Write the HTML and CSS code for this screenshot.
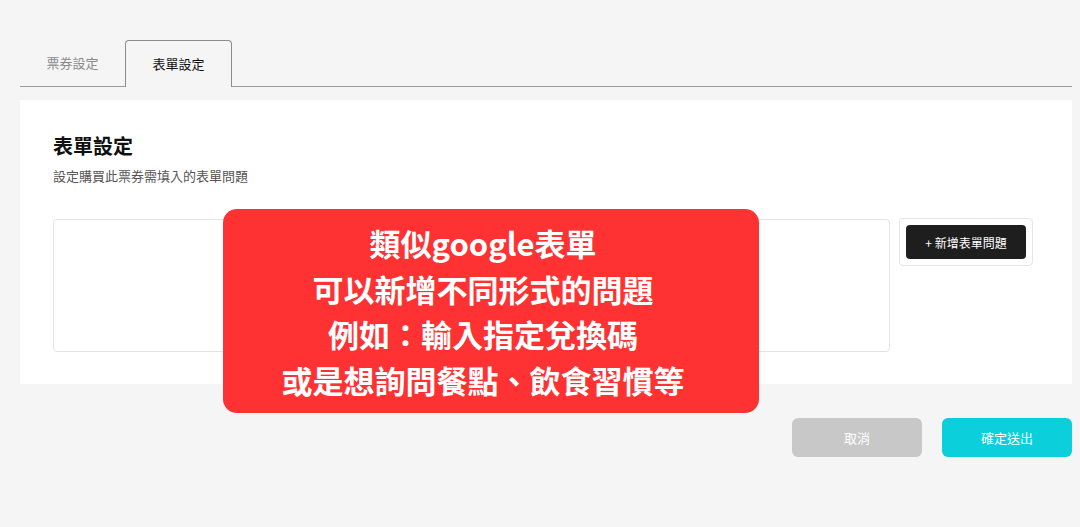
FILE: index.html
```html
<html>
    <head>
        <link rel="stylesheet" href="styles.css">
    </head>
    <body>
        <div id="page">
            <div class="tabs">
                <div class="tab">票券設定</div>
                <div class="tab active">表單設定</div>
            </div>
            <div class="panel">
                <h2>表單設定</h2>
                <p class="desc">設定購買此票券需填入的表單問題</p>
                <div class="formrow">
                    <div class="questions"></div>
                    <div class="addwrap">
                        <button class="addbtn">+ 新增表單問題</button>
                    </div>
                </div>
            </div>
            <div class="actions">
                <button class="btn cancel">取消</button>
                <button class="btn submit">確定送出</button>
            </div>
        </div>
        <div class="note">
            類似google表單<br />
            可以新增不同形式的問題<br />
            例如：輸入指定兌換碼<br />
            或是想詢問餐點、飲食習慣等
        </div>
    </body>
</html>
```

FILE: styles.css
```css
* {
    box-sizing: border-box;
    font-family: "Noto Sans CJK TC", "Noto Sans", sans-serif;
}
body {
    margin: 0;
    background-color: #f5f5f5;
}
#page {
    padding: 40px 8px 0 20px;
}
.tabs {
    display: flex;
    border-bottom: 1px solid #9a9a9a;
    height: 47px;
}
.tab {
    width: 105px;
    height: 47px;
    line-height: 46px;
    text-align: center;
    font-size: 13px;
    color: #8a8a8a;
}
.tab.active {
    width: 107px;
    color: #111;
    border: 1px solid #8c8c8c;
    border-bottom: none;
    border-radius: 4px 4px 0 0;
    background-color: #f5f5f5;
    margin-bottom: -1px;
    height: 47px;
    line-height: 45px;
}
.panel {
    margin-top: 13px;
    background-color: #fff;
    height: 284px;
    padding: 32px 39px 0 33px;
}
h2 {
    margin: 0;
    font-size: 20px;
    font-weight: 700;
    line-height: 28px;
    color: #111;
}
.desc {
    margin: 7px 0 0 0;
    font-size: 13px;
    color: #555;
    line-height: 18px;
}
.formrow {
    display: flex;
    align-items: flex-start;
    gap: 9px;
    margin-top: 33px;
}
.questions {
    flex: 1;
    height: 133px;
    margin-top: 1px;
    border: 1px solid #e3e3e3;
    border-radius: 4px;
}
.addwrap {
    width: 134px;
    height: 48px;
    border: 1px solid #e6e6e6;
    border-radius: 4px;
    padding: 6px;
}
.addbtn {
    width: 120px;
    height: 34px;
    border: none;
    border-radius: 4px;
    background-color: #1e1e1e;
    color: #fff;
    font-size: 12px;
}
.actions {
    display: flex;
    justify-content: flex-end;
    gap: 20px;
    margin-top: 34px;
}
.btn {
    width: 130px;
    height: 39px;
    border: none;
    border-radius: 6px;
    color: #fff;
    font-size: 13px;
}
.cancel {
    background-color: #c8c8c8;
}
.submit {
    background-color: #0bd0dc;
}
.note {
    position: absolute;
    left: 223px;
    top: 209px;
    width: 536px;
    height: 204px;
    border-radius: 14px;
    background-color: #fe3232;
    color: #fff;
    font-size: 31px;
    font-weight: 700;
    line-height: 45.5px;
    text-align: center;
    padding: 11px 16px 0 0;
}
```
